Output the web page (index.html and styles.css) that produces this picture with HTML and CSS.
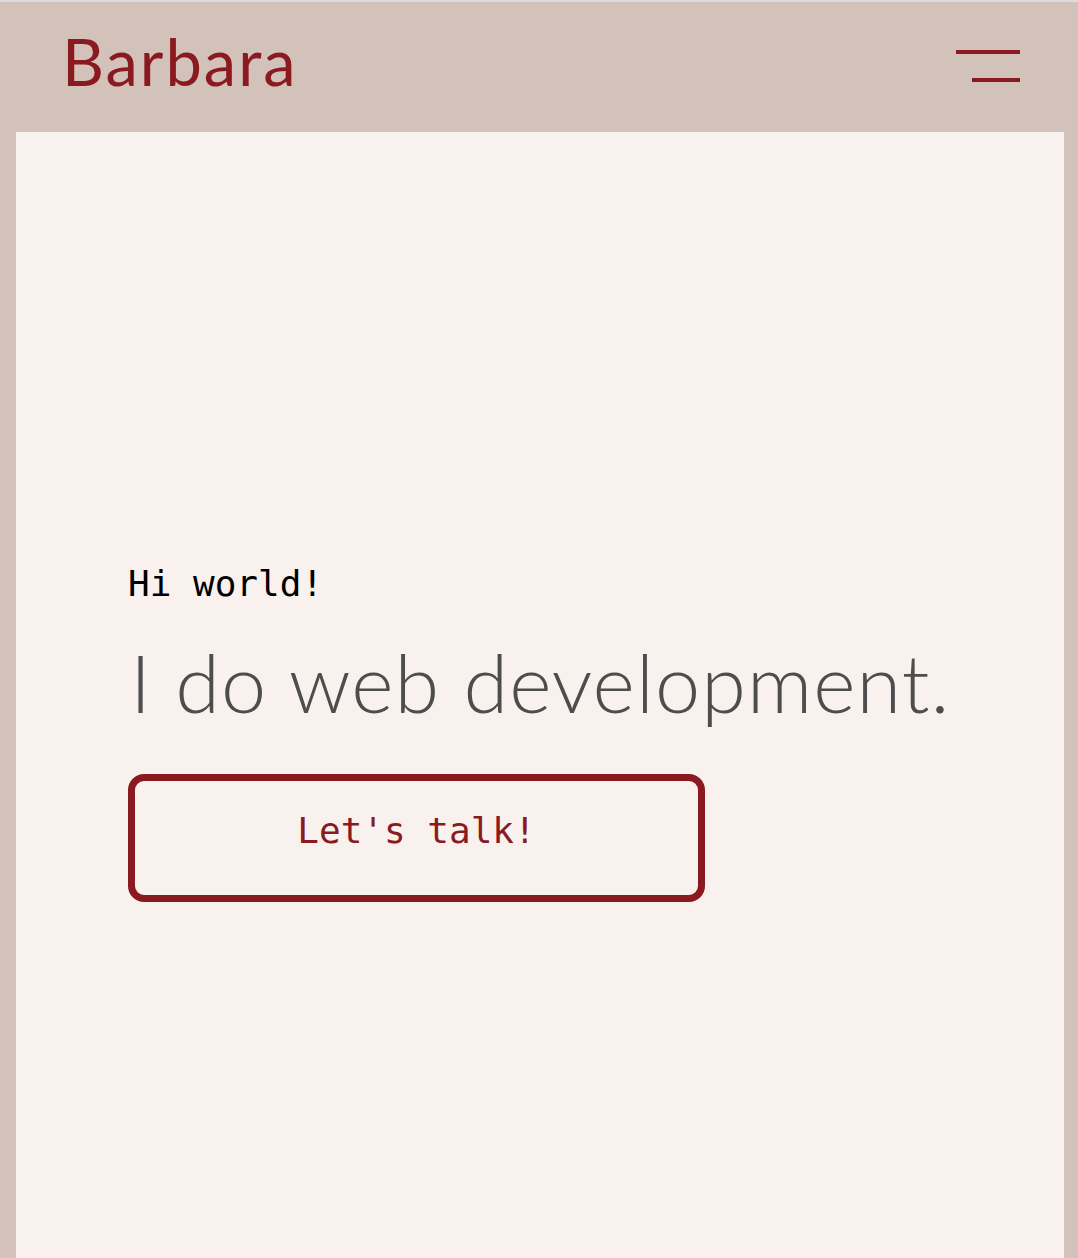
FILE: index.html
```html
<!DOCTYPE html>
<html lang="en">
<head>
<meta charset="utf-8">
<title>Barbara</title>
<link rel="stylesheet" href="styles.css">
</head>
<body>
<div class="page">
  <header class="header">
    <a class="logo" href="#">Barbara</a>
    <button class="menu" aria-label="Menu">
      <span class="bar bar-long"></span>
      <span class="bar bar-short"></span>
    </button>
  </header>
  <main class="main">
    <section class="hero">
      <p class="greeting">Hi world!</p>
      <h1 class="title">I do web development.</h1>
      <a class="cta" href="#">Let's talk!</a>
    </section>
  </main>
</div>
</body>
</html>
```

FILE: styles.css
```css
html, body {
  margin: 0;
  padding: 0;
  height: 100%;
}
body {
  background: #d3c2b9;
  border-top: 2px solid #dcdcdc;
  box-sizing: border-box;
  overflow: hidden;
}
.page {
  display: flex;
  flex-direction: column;
  height: 100%;
}
.header {
  height: 130px;
  flex: 0 0 130px;
  display: flex;
  align-items: center;
  justify-content: space-between;
  padding: 0 58px 0 62px;
}
.logo {
  font-family: "Lato", sans-serif;
  font-weight: 400;
  font-size: 65px;
  line-height: 1;
  letter-spacing: 2px;
  color: #8a1a1f;
  text-decoration: none;
  margin-top: -12px;
}
.menu {
  background: none;
  border: 0;
  padding: 0;
  width: 64px;
  display: flex;
  flex-direction: column;
  align-items: flex-end;
  gap: 24px;
  margin-top: -2px;
}
.bar {
  display: block;
  height: 4px;
  background: #8a1a1f;
}
.bar-long { width: 64px; }
.bar-short { width: 48px; }
.main {
  flex: 1;
  margin: 0 14px 0 16px;
  background: #f9f1ee;
  padding: 432px 0 0 112px;
}
.hero {
  display: flex;
  flex-direction: column;
  align-items: flex-start;
}
.greeting {
  margin: 0;
  font-family: "DejaVu Sans Mono", monospace;
  font-size: 36px;
  line-height: 40px;
  color: #000;
}
.title {
  margin: 38px 0 0 2px;
  font-family: "Lato", sans-serif;
  font-weight: 300;
  font-size: 81px;
  line-height: 80px;
  letter-spacing: 1.1px;
  color: #4d4d4d;
}
.cta {
  margin-top: 52px;
  box-sizing: border-box;
  width: 577px;
  height: 128px;
  border: 7px solid #8a1a1f;
  border-radius: 16px;
  padding: 30px 0 0 0;
  text-align: center;
  font-family: "DejaVu Sans Mono", monospace;
  font-size: 36px;
  line-height: 40px;
  color: #8a1a1f;
  text-decoration: none;
}
```
